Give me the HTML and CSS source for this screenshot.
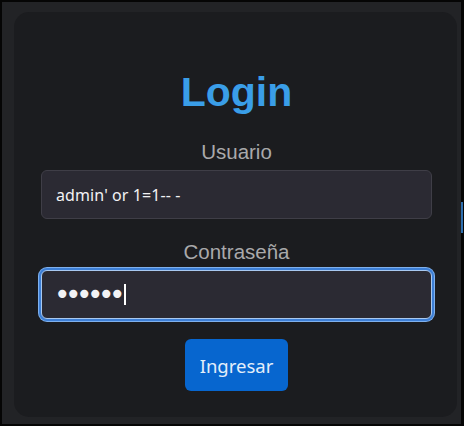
FILE: index.html
```html
<!DOCTYPE html>
<html lang="es">
<head>
  <meta charset="UTF-8">
  <meta name="viewport" content="width=device-width, initial-scale=1">
  <title>Login</title>
  <link rel="stylesheet" href="styles.css">
</head>
<body>
  <div class="frame">
    <form class="card" onsubmit="return false">
      <h1>Login</h1>
      <label for="user">Usuario</label>
      <input type="text" id="user" value="admin' or 1=1-- -">
      <label for="pass">Contraseña</label>
      <div class="pass-wrap">
        <input type="password" id="pass" class="focused" value="123456">
        <span class="caret"></span>
      </div>
      <button type="submit">Ingresar</button>
    </form>
    <div class="edge-thumb"></div>
  </div>
</body>
</html>
```

FILE: styles.css
```css
html, body {
  margin: 0;
  padding: 0;
  background: #000;
}
.frame {
  position: relative;
  box-sizing: border-box;
  width: 464px;
  height: 426px;
  border-style: solid;
  border-color: #050505;
  border-width: 2px 3px 2px 2px;
  background: #222326;
  padding: 10px 4px 7px 12px;
}
.card {
  box-sizing: border-box;
  height: 100%;
  background: #1b1c1f;
  border-radius: 15px;
  padding: 56px 25px 0 27px;
  display: flex;
  flex-direction: column;
  align-items: center;
}
h1 {
  margin: 0 0 24px;
  font-family: "Liberation Sans", Arial, sans-serif;
  font-size: 41px;
  line-height: 48px;
  font-weight: bold;
  color: #3a9ee8;
}
label {
  font-family: "Liberation Sans", Arial, sans-serif;
  font-size: 20.5px;
  line-height: 24px;
  color: #a9a9ab;
  margin-bottom: 6px;
}
input {
  box-sizing: border-box;
  width: 100%;
  height: 49px;
  padding: 0 14px;
  background: #2b2a33;
  border: 1px solid #3f3e47;
  border-radius: 6px;
  color: #f2f2f4;
  font-family: "Noto Sans", sans-serif;
  font-size: 16px;
  letter-spacing: 0.1px;
  margin: 0 0 21px;
}
input:focus, input.focused {
  outline: none;
  border-color: #a8c8f0;
  box-shadow: 0 0 0 2px #3d7fd6, 0 0 0 3px #7fb0ec;
}
.pass-wrap {
  position: relative;
  width: 100%;
  margin-bottom: 20px;
}
.pass-wrap input {
  margin: 0;
  padding-left: 12px;
  font-family: "DejaVu Sans", sans-serif;
  font-size: 28px;
  letter-spacing: -5.5px;
  caret-color: transparent;
}
.caret {
  position: absolute;
  left: 83px;
  top: 14px;
  width: 2px;
  height: 21px;
  background: #fff;
}
button {
  height: 52px;
  padding: 0 15px;
  border: none;
  border-radius: 6px;
  background: #0766cf;
  color: #e3eefa;
  font-family: "Noto Sans", sans-serif;
  font-size: 18.5px;
  cursor: pointer;
}
button:hover { background: #0a5bb8; }
.edge-thumb {
  position: absolute;
  right: -2px;
  top: 200px;
  width: 2px;
  height: 31px;
  background: #2f6fae;
}
```
